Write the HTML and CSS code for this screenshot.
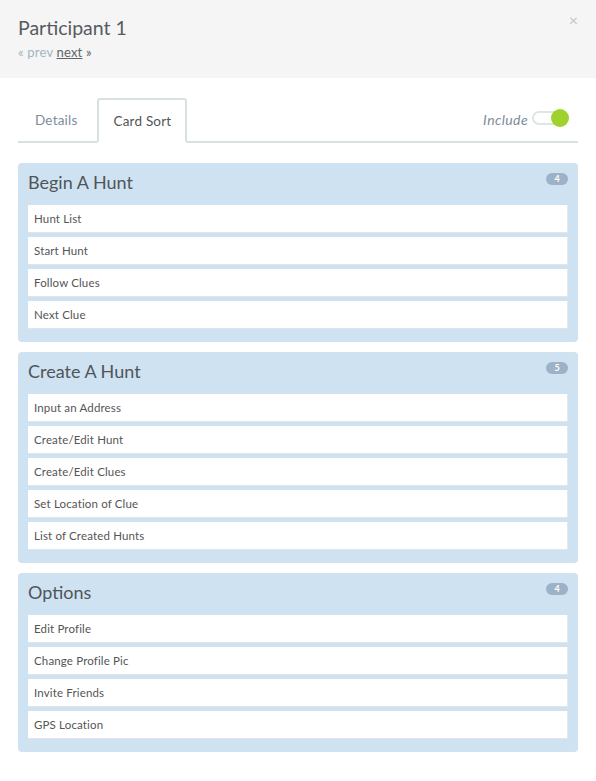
FILE: index.html
```html
<!DOCTYPE html>
<html>
<head>
<meta charset="utf-8">
<link rel="stylesheet" href="styles.css">
</head>
<body>
<div class="header">
  <div class="title">Participant 1</div>
  <div class="pager"><span class="muted">« prev</span> <a class="next">next</a> <span class="raquo">»</span></div>
  <span class="close">×</span>
</div>
<div class="content">
  <div class="tabs">
    <div class="tab">Details</div>
    <div class="tab active">Card Sort</div>
    <div class="spacer"></div>
    <div class="include">Include</div>
    <div class="toggle"><span class="knob"></span></div>
  </div>

  <div class="panel">
    <div class="panel-head"><span class="panel-title">Begin A Hunt</span><span class="badge">4</span></div>
    <div class="card">Hunt List</div>
    <div class="card">Start Hunt</div>
    <div class="card">Follow Clues</div>
    <div class="card">Next Clue</div>
  </div>

  <div class="panel">
    <div class="panel-head"><span class="panel-title">Create A Hunt</span><span class="badge">5</span></div>
    <div class="card">Input an Address</div>
    <div class="card">Create/Edit Hunt</div>
    <div class="card">Create/Edit Clues</div>
    <div class="card">Set Location of Clue</div>
    <div class="card">List of Created Hunts</div>
  </div>

  <div class="panel">
    <div class="panel-head"><span class="panel-title">Options</span><span class="badge">4</span></div>
    <div class="card">Edit Profile</div>
    <div class="card">Change Profile Pic</div>
    <div class="card">Invite Friends</div>
    <div class="card">GPS Location</div>
  </div>
</div>
</body>
</html>
```

FILE: styles.css
```css
* { box-sizing: border-box; }
body {
  margin: 0;
  background: #ffffff;
  font-family: Lato, "Open Sans", sans-serif;
  color: #555;
}
.header {
  position: relative;
  background: #f5f5f5;
  height: 78px;
  padding: 15px 18px 0;
}
.title {
  font-size: 19.5px;
  line-height: 26px;
  color: #555b60;
}
.pager {
  font-size: 13px;
  line-height: 18px;
  margin-top: 2px;
  letter-spacing: 0.2px;
}
.muted { color: #a3b5c3; }
.next { color: #5f6468; text-decoration: underline; }
.raquo { color: #5f6468; }
.close {
  position: absolute;
  right: 18px;
  top: 10px;
  font-size: 16px;
  color: #c3c7ca;
}
.content {
  padding: 20px 18px 0;
}
.tabs {
  display: flex;
  align-items: center;
  height: 45px;
  border-bottom: 2px solid #d7e1e1;
}
.tab {
  height: 45px;
  padding: 0 17px;
  border-top: 1px solid transparent;
  font-size: 13.5px;
  letter-spacing: 0.2px;
  line-height: 43px;
  color: #7d8d9b;
  align-self: flex-start;
}
.tab.active {
  color: #555;
  border: 2px solid #d7e1e1;
  border-bottom: 2px solid #ffffff;
  border-radius: 3px 3px 0 0;
  padding: 0 14px;
  margin-left: 3px;
}
.spacer { flex: 1; }
.include {
  font-style: italic;
  font-size: 14px;
  letter-spacing: 0.4px;
  color: #7d8b98;
  margin-right: 4px;
}
.toggle {
  position: relative;
  width: 36px;
  height: 14px;
  border: 2px solid #dfe5e5;
  border-radius: 7px;
  background: #fff;
  margin-right: 10px;
  margin-top: -4px;
}
.knob {
  position: absolute;
  right: -3px;
  top: -4px;
  width: 18px;
  height: 18px;
  border-radius: 50%;
  background: #9fd22a;
}
.panel {
  margin-top: 20px;
  background: #cfe2f2;
  border-radius: 4px;
  padding: 0 10px 9px;
}
.panel + .panel { margin-top: 10px; }
.panel-head {
  height: 42px;
  display: flex;
  align-items: center;
  justify-content: space-between;
}
.panel-title {
  font-size: 18px;
  color: #505559;
  margin-top: -4px;
}
.badge {
  width: 22px;
  height: 12px;
  border-radius: 6px;
  background: #9db2c7;
  color: #fff;
  font-size: 9px;
  font-weight: bold;
  line-height: 12px;
  text-align: center;
  margin-top: -10px;
}
.card {
  background: #fff;
  height: 28px;
  margin-bottom: 4px;
  border-bottom: 1px solid #dfe5ea;
  border-right: 1px solid #e4e9ed;
  padding-left: 6px;
  font-size: 11.5px;
  letter-spacing: 0.15px;
  line-height: 27px;
  color: #555;
}
```
